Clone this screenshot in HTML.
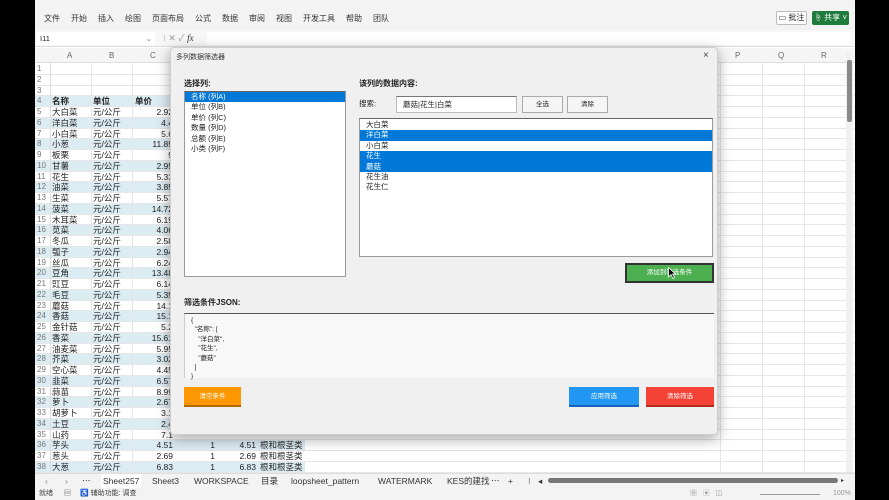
<!DOCTYPE html>
<html><head><meta charset="utf-8"><style>
*{margin:0;padding:0;box-sizing:border-box}
body{width:889px;height:500px;overflow:hidden;background:#000;font-family:"Liberation Sans","Noto Sans CJK SC",sans-serif;position:relative;color:#222}
.a{position:absolute;white-space:nowrap}
#app{position:absolute;left:35px;top:0;width:820px;height:500px;background:#fff;overflow:hidden}
.r{position:absolute;left:0;width:820px;height:10.75px;font-size:8.5px;line-height:10.75px;border-bottom:1px solid #e6e6e6}
.r.b{background:linear-gradient(to right,#dcecf3 0,#dcecf3 270px,#fff 270px)}
.r span{position:absolute}
.n{left:2px;color:#777;font-size:8px}
.ca{left:17px}.cb{left:58px}.cc{left:96px;width:42px;text-align:right}
.cd{left:160px;width:20px;text-align:right}.ce{left:184px;width:37px;text-align:right}.cf{left:225px}
.dlg{position:absolute;left:170px;top:47px;width:548px;height:388px;background:#f0f0f0;border:1px solid #cfcfcf;border-radius:4px;box-shadow:0 4px 14px rgba(0,0,0,.35);font-size:7.5px}
.lb{font-weight:bold;font-size:8px}
.btn{position:absolute;font-size:6.5px;text-align:center;color:#fff}
.sel{background:#0078d7;color:#fff}
</style></head><body>
<div id="app">
 <div class="a" style="left:0;top:0;width:820px;height:30px;background:#f3f3f3"></div>
 <div class="a" style="left:0;top:13px;font-size:8px;color:#333;word-spacing:0">
  <span style="margin-left:9px">文件</span><span style="margin-left:11px">开始</span><span style="margin-left:11px">插入</span><span style="margin-left:11px">绘图</span><span style="margin-left:11px">页面布局</span><span style="margin-left:11px">公式</span><span style="margin-left:11px">数据</span><span style="margin-left:11px">审阅</span><span style="margin-left:11px">视图</span><span style="margin-left:11px">开发工具</span><span style="margin-left:11px">帮助</span><span style="margin-left:11px">团队</span></div>
 <div class="a" style="left:741px;top:11px;width:31px;height:14px;border:1px solid #bbb;border-radius:2px;background:#fff;font-size:8px;line-height:12px;text-align:center">▭ 批注</div>
 <div class="a" style="left:777px;top:11px;width:37px;height:14px;border-radius:2px;background:#1e7b3c;color:#fff;font-size:8px;line-height:14px;text-align:center">☝ 共享 ˅</div>
 <div class="a" style="left:0;top:30px;width:820px;height:17px;background:#f7f7f7;border-bottom:1px solid #ddd"></div>
 <div class="a" style="left:2px;top:32px;width:118px;height:13px;background:#fff;font-size:7.5px;line-height:13px;padding-left:3px">I11<span style="position:absolute;right:3px;color:#777">⌄</span></div>
 <div class="a" style="left:128px;top:32px;font-size:9px;color:#999;line-height:13px">⁝ ✕ ✓ <i style="color:#333;font-family:'Liberation Serif',serif">fx</i></div>
 <div class="a" style="left:172px;top:32px;width:643px;height:13px;background:#fff"></div>
 <div class="a" style="left:0;top:48px;width:820px;height:15px;background:#f5f5f5;border-bottom:1px solid #ddd;font-size:8px;color:#666;line-height:15px">
  <span class="a" style="left:32px">A</span><span class="a" style="left:74px">B</span><span class="a" style="left:115px">C</span><span class="a" style="left:700px">P</span><span class="a" style="left:743px">Q</span><span class="a" style="left:786px">R</span></div>
 <div style="position:absolute;left:0;top:64px">
<div class="r" style="top:0"><span class="n">1</span></div>
<div class="r" style="top:10.75px"><span class="n">2</span></div>
<div class="r" style="top:21.5px"><span class="n">3</span></div>
<div class="r b" style="top:32.25px;font-weight:bold"><span class="n" style="font-weight:normal">4</span><span class="ca">名称</span><span class="cb">单位</span><span class="a" style="left:100px">单价</span></div>
<div class="r" style="top:43px"><span class="n">5</span><span class="ca">大白菜</span><span class="cb">元/公斤</span><span class="cc">2.92</span></div>
<div class="r b" style="top:53.75px"><span class="n">6</span><span class="ca">洋白菜</span><span class="cb">元/公斤</span><span class="cc">4.4</span></div>
<div class="r" style="top:64.5px"><span class="n">7</span><span class="ca">小白菜</span><span class="cb">元/公斤</span><span class="cc">5.6</span></div>
<div class="r b" style="top:75.25px"><span class="n">8</span><span class="ca">小葱</span><span class="cb">元/公斤</span><span class="cc">11.85</span></div>
<div class="r" style="top:86px"><span class="n">9</span><span class="ca">板栗</span><span class="cb">元/公斤</span><span class="cc">9</span></div>
<div class="r b" style="top:96.75px"><span class="n">10</span><span class="ca">甘薯</span><span class="cb">元/公斤</span><span class="cc">2.95</span></div>
<div class="r" style="top:107.5px"><span class="n">11</span><span class="ca">花生</span><span class="cb">元/公斤</span><span class="cc">5.33</span></div>
<div class="r b" style="top:118.25px"><span class="n">12</span><span class="ca">油菜</span><span class="cb">元/公斤</span><span class="cc">3.85</span></div>
<div class="r" style="top:129px"><span class="n">13</span><span class="ca">生菜</span><span class="cb">元/公斤</span><span class="cc">5.57</span></div>
<div class="r b" style="top:139.75px"><span class="n">14</span><span class="ca">菠菜</span><span class="cb">元/公斤</span><span class="cc">14.72</span></div>
<div class="r" style="top:150.5px"><span class="n">15</span><span class="ca">木耳菜</span><span class="cb">元/公斤</span><span class="cc">6.19</span></div>
<div class="r b" style="top:161.25px"><span class="n">16</span><span class="ca">苋菜</span><span class="cb">元/公斤</span><span class="cc">4.06</span></div>
<div class="r" style="top:172px"><span class="n">17</span><span class="ca">冬瓜</span><span class="cb">元/公斤</span><span class="cc">2.58</span></div>
<div class="r b" style="top:182.75px"><span class="n">18</span><span class="ca">瓠子</span><span class="cb">元/公斤</span><span class="cc">2.94</span></div>
<div class="r" style="top:193.5px"><span class="n">19</span><span class="ca">丝瓜</span><span class="cb">元/公斤</span><span class="cc">6.24</span></div>
<div class="r b" style="top:204.25px"><span class="n">20</span><span class="ca">豆角</span><span class="cb">元/公斤</span><span class="cc">13.48</span></div>
<div class="r" style="top:215px"><span class="n">21</span><span class="ca">豇豆</span><span class="cb">元/公斤</span><span class="cc">6.14</span></div>
<div class="r b" style="top:225.75px"><span class="n">22</span><span class="ca">毛豆</span><span class="cb">元/公斤</span><span class="cc">5.35</span></div>
<div class="r" style="top:236.5px"><span class="n">23</span><span class="ca">蘑菇</span><span class="cb">元/公斤</span><span class="cc">14.1</span></div>
<div class="r b" style="top:247.25px"><span class="n">24</span><span class="ca">香菇</span><span class="cb">元/公斤</span><span class="cc">15.1</span></div>
<div class="r" style="top:258px"><span class="n">25</span><span class="ca">金针菇</span><span class="cb">元/公斤</span><span class="cc">5.2</span></div>
<div class="r b" style="top:268.75px"><span class="n">26</span><span class="ca">香菜</span><span class="cb">元/公斤</span><span class="cc">15.61</span></div>
<div class="r" style="top:279.5px"><span class="n">27</span><span class="ca">油麦菜</span><span class="cb">元/公斤</span><span class="cc">5.95</span></div>
<div class="r b" style="top:290.25px"><span class="n">28</span><span class="ca">芥菜</span><span class="cb">元/公斤</span><span class="cc">3.02</span></div>
<div class="r" style="top:301px"><span class="n">29</span><span class="ca">空心菜</span><span class="cb">元/公斤</span><span class="cc">4.45</span></div>
<div class="r b" style="top:311.75px"><span class="n">30</span><span class="ca">韭菜</span><span class="cb">元/公斤</span><span class="cc">6.57</span></div>
<div class="r" style="top:322.5px"><span class="n">31</span><span class="ca">蒜苗</span><span class="cb">元/公斤</span><span class="cc">8.99</span></div>
<div class="r b" style="top:333.25px"><span class="n">32</span><span class="ca">萝卜</span><span class="cb">元/公斤</span><span class="cc">2.67</span></div>
<div class="r" style="top:344px"><span class="n">33</span><span class="ca">胡萝卜</span><span class="cb">元/公斤</span><span class="cc">3.1</span></div>
<div class="r b" style="top:354.75px"><span class="n">34</span><span class="ca">土豆</span><span class="cb">元/公斤</span><span class="cc">2.4</span></div>
<div class="r" style="top:365.5px"><span class="n">35</span><span class="ca">山药</span><span class="cb">元/公斤</span><span class="cc">7.1</span></div>
<div class="r b" style="top:376.25px"><span class="n">36</span><span class="ca">芋头</span><span class="cb">元/公斤</span><span class="cc">4.51</span><span class="cd">1</span><span class="ce">4.51</span><span class="cf">根和根茎类</span></div>
<div class="r" style="top:387px"><span class="n">37</span><span class="ca">葱头</span><span class="cb">元/公斤</span><span class="cc">2.69</span><span class="cd">1</span><span class="ce">2.69</span><span class="cf">根和根茎类</span></div>
<div class="r b" style="top:397.75px"><span class="n">38</span><span class="ca">大葱</span><span class="cb">元/公斤</span><span class="cc">6.83</span><span class="cd">1</span><span class="ce">6.83</span><span class="cf">根和根茎类</span></div>
 </div>
 <div class="a" style="left:15px;top:63px;width:1px;height:410px;background:#ddd"></div>
 <div class="a" style="left:56px;top:63px;width:1px;height:410px;background:#e6e6e6"></div>
 <div class="a" style="left:97px;top:63px;width:1px;height:410px;background:#e6e6e6"></div>
 <div class="a" style="left:685px;top:63px;width:1px;height:410px;background:#e6e6e6"></div>
 <div class="a" style="left:727px;top:63px;width:1px;height:410px;background:#e6e6e6"></div>
 <div class="a" style="left:769px;top:63px;width:1px;height:410px;background:#e6e6e6"></div>
 <div class="a" style="left:811px;top:52px;width:7px;height:420px;background:#f0f0f0"></div>
 <div class="a" style="left:812px;top:60px;width:5px;height:62px;background:#8a8a8a;border-radius:2px"></div>
 <div class="a" style="left:0;top:473px;width:820px;height:15px;background:#f3f3f3;border-top:1px solid #ddd;font-size:8.5px;line-height:14px;color:#333">
  <span class="a" style="left:10px;color:#888">‹</span><span class="a" style="left:30px;color:#888">›</span><span class="a" style="left:47px">⋯</span>
  <span class="a" style="left:66px;border-bottom:2px solid #1e7b3c;background:#fff;padding:0 2px">Sheet257</span>
  <span class="a" style="left:117px">Sheet3</span><span class="a" style="left:159px">WORKSPACE</span><span class="a" style="left:226px">目录</span><span class="a" style="left:256px">loopsheet_pattern</span><span class="a" style="left:343px">WATERMARK</span><span class="a" style="left:412px">KES的建找</span><span class="a" style="left:456px">⋯</span><span class="a" style="left:473px">+</span><span class="a" style="left:493px">⁝</span><span class="a" style="left:503px">◂</span>
  <span class="a" style="left:513px;top:4px;width:290px;height:5px;background:#777;border-radius:3px"></span><span class="a" style="left:806px;font-size:6px">▸</span></div>
 <div class="a" style="left:0;top:488px;width:820px;height:12px;background:#f3f3f3;font-size:7px;line-height:12px;color:#444"><span class="a" style="left:4px">就绪</span><span class="a" style="left:29px">▤</span><span class="a" style="left:45px">♿ 辅助功能: 调查</span><span class="a" style="left:655px;color:#999">▦ &nbsp; ▣ &nbsp; ◫</span><span class="a" style="left:725px;top:6px;width:60px;height:1px;background:#999"></span><span class="a" style="left:798px;color:#999">100%</span></div>
</div>
<div class="dlg">
 <div class="a" style="left:5px;top:4px;font-size:7px;color:#333">多列数据筛选器</div>
 <div class="a" style="left:532px;top:2px;font-size:10px;color:#444">×</div>
 <div class="a lb" style="left:13px;top:30px">选择列:</div>
 <div class="a" style="left:13px;top:43px;width:162px;height:186px;background:#fff;border:1px solid #999;border-top-color:#666;font-size:7.5px;line-height:10.4px">
  <div class="sel" style="padding-left:6px">名称 (列A)</div><div style="padding-left:6px">单位 (列B)</div><div style="padding-left:6px">单价 (列C)</div><div style="padding-left:6px">数量 (列D)</div><div style="padding-left:6px">总额 (列E)</div><div style="padding-left:6px">小类 (列F)</div></div>
 <div class="a lb" style="left:188px;top:30px">该列的数据内容:</div>
 <div class="a" style="left:188px;top:50px">搜索:</div>
 <div class="a" style="left:225px;top:48px;width:121px;height:17px;background:#fff;border:1px solid #bbb;border-top-color:#777;padding-left:6px;line-height:15px">蘑菇|花生|白菜</div>
 <div class="a" style="left:351px;top:48px;width:41px;height:17px;background:#f5f5f5;border:1px solid #aaa;text-align:center;line-height:15px;font-size:6.5px">全选</div>
 <div class="a" style="left:396px;top:48px;width:41px;height:17px;background:#f5f5f5;border:1px solid #aaa;text-align:center;line-height:15px;font-size:6.5px">清除</div>
 <div class="a" style="left:188px;top:70px;width:354px;height:139px;background:#fff;border:1px solid #999;border-top-color:#666;font-size:7.5px;line-height:10.4px;padding-top:1px">
  <div style="padding-left:6px">大白菜</div><div class="sel" style="padding-left:6px">洋白菜</div><div style="padding-left:6px">小白菜</div><div class="sel" style="padding-left:6px">花生</div><div class="sel" style="padding-left:6px">蘑菇</div><div style="padding-left:6px">花生油</div><div style="padding-left:6px">花生仁</div></div>
 <div class="btn" style="left:454px;top:215px;width:89px;height:20px;background:#4caf50;border:2px solid #333;line-height:16px">添加到筛选条件</div>
 <svg class="a" style="left:497px;top:219px" width="8" height="12" viewBox="0 0 8 12"><path d="M0.5 0.5 L0.5 10 L3 7.5 L5 11.5 L6.5 10.8 L4.6 7 L7.5 7 Z" fill="#000" stroke="#fff" stroke-width="0.8"/></svg>
 <div class="a lb" style="left:13px;top:249px">筛选条件JSON:</div>
 <div class="a" style="left:13px;top:265px;width:530px;height:65px;background:#f8f8f8;border-top:1.5px solid #555;border-left:1px solid #ccc;font-size:6.5px;line-height:9.4px;padding:2px 0 0 6px;white-space:pre;font-family:'Liberation Sans','Noto Sans CJK SC',sans-serif">{
  "名称": [
    "洋白菜",
    "花生",
    "蘑菇"
  ]
}</div>
 <div class="btn" style="left:13px;top:339px;width:57px;height:20px;background:#ff9800;border-bottom:2px solid #b36a00;line-height:19px">清空条件</div>
 <div class="btn" style="left:398px;top:339px;width:70px;height:20px;background:#2196f3;border-bottom:2px solid #1565c0;line-height:19px">应用筛选</div>
 <div class="btn" style="left:475px;top:339px;width:68px;height:20px;background:#f44336;border-bottom:2px solid #b02a20;line-height:19px">清除筛选</div>
</div>
</body></html>
